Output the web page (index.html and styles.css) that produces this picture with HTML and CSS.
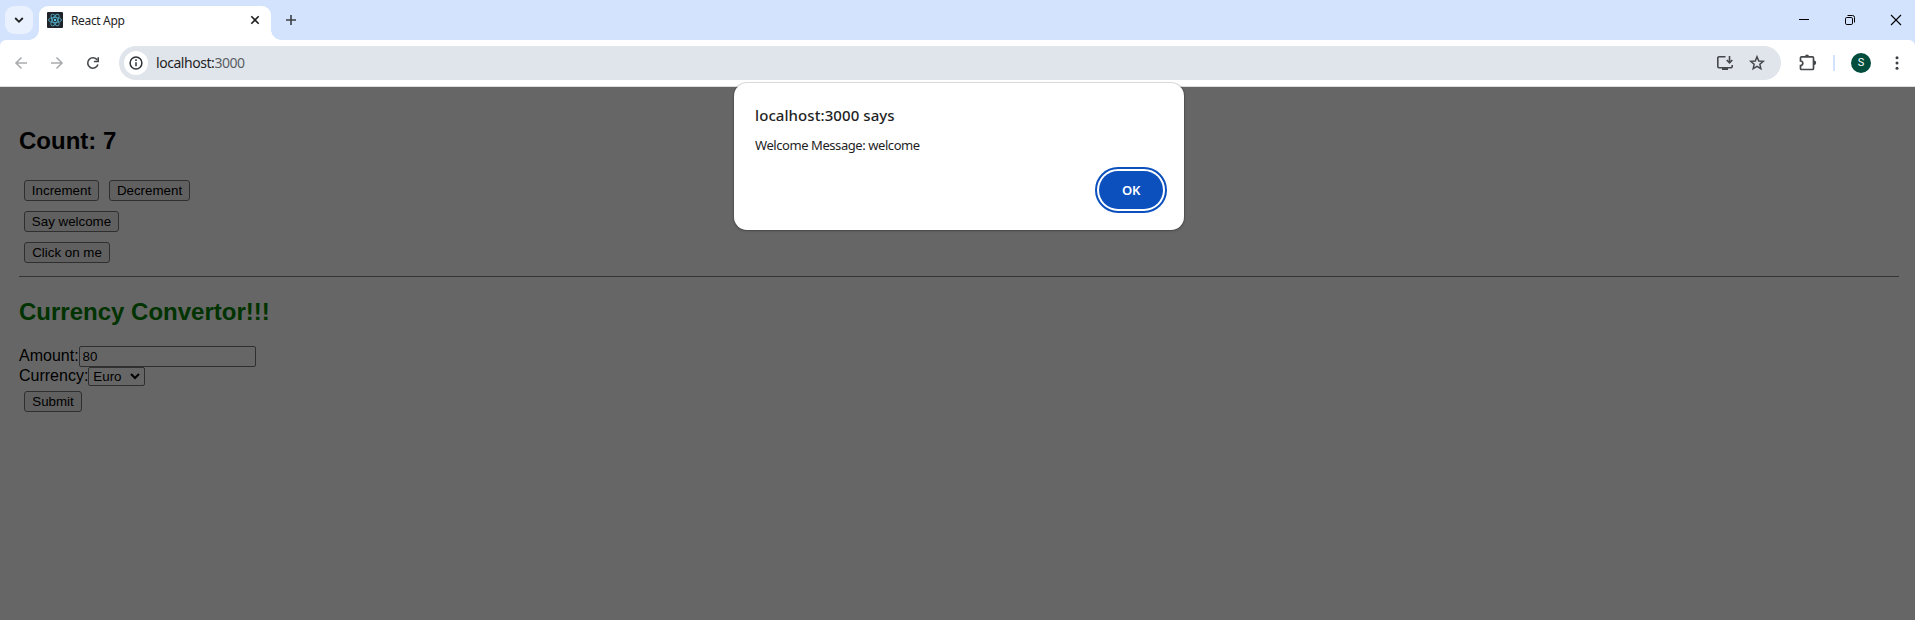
FILE: index.html
```html
<!DOCTYPE html>
<html lang="en">
<head>
<meta charset="utf-8">
<title>React App</title>
<link rel="stylesheet" href="styles.css">
</head>
<body>
<div class="browser">
  <header class="tabstrip">
    <div class="tab-search"><svg width="28" height="28" viewBox="0 0 28 28" fill="none" stroke="#1f1f1f" stroke-width="1.800"><path d="M10.200 12 14 15.800l3.800-3.800"/></svg></div>
    <div class="tab">
      <svg class="favicon" width="16" height="16" viewBox="0 0 16 16"><rect width="16" height="16" rx="1" fill="#20232a"/><g fill="none" stroke="#4fa9c0" stroke-width=".9"><ellipse cx="8" cy="8" rx="6.5" ry="2.6"/><ellipse cx="8" cy="8" rx="6.5" ry="2.6" transform="rotate(60 8 8)"/><ellipse cx="8" cy="8" rx="6.5" ry="2.6" transform="rotate(120 8 8)"/></g><circle cx="8" cy="8" r="1.2" fill="#5fcde8"/></svg>
      <span class="tab-title">React App</span>
      <svg class="tab-close" width="10" height="10" viewBox="0 0 10 10" stroke="#1f1f1f" stroke-width="1.600"><path d="m1.300 1.300 7.400 7.400M8.700 1.300 1.300 8.700"/></svg>
    </div>
    <svg class="new-tab" width="12" height="12" viewBox="0 0 12 12" stroke="#3c4043" stroke-width="1.600"><path d="M6 1v10M1 6h10"/></svg>
    <div class="window-controls">
      <svg width="46" height="40" viewBox="0 0 46 40" stroke="#000"><path d="M18 19.500h10"/></svg>
      <svg width="46" height="40" viewBox="0 0 46 40" fill="none" stroke="#000"><rect x="18.500" y="17.500" width="7" height="7" rx="1.300"/><path d="M20.500 15.500h5a2 2 0 0 1 2 2v5"/></svg>
      <svg width="46" height="40" viewBox="0 0 46 40" stroke="#000" stroke-width="1.100"><path d="m18 15 10 10M28 15 18 25"/></svg>
    </div>
  </header>
  <nav class="toolbar">
    <svg class="nav-icon" width="36" height="46" viewBox="0 0 36 46" fill="none" stroke="#aaacae" stroke-width="1.600"><path d="M24 23h-11M18.500 17.500 13 23l5.500 5.500"/></svg>
    <svg class="nav-icon" width="36" height="46" viewBox="0 0 36 46" fill="none" stroke="#aaacae" stroke-width="1.600"><path d="M12 23h11M17.500 17.500 23 23l-5.500 5.500"/></svg>
    <svg class="nav-icon" width="36" height="46" viewBox="0 0 36 46" fill="none" stroke="#45484b" stroke-width="1.600"><path d="M22.900 24.500a5.200 5.200 0 1 1-.7-4.500"/><path d="M23.200 17.200v4.300h-4.300"/></svg>
    <div class="omnibox">
      <div class="site-info"><svg width="24" height="24" viewBox="0 0 24 24" fill="none" stroke="#303336" stroke-width="1.500"><circle cx="12" cy="12" r="5.900"/><path d="M12 11.200v4M12 8.300v1.700"/></svg></div>
      <span class="url">localhost:<span class="port">3000</span></span>
      <svg class="install" width="18" height="18" viewBox="0 0 18 18" fill="none" stroke="#45484b" stroke-width="1.600"><path d="M9.500 2.800H3a1.200 1.200 0 0 0-1.200 1.200v8.500a1.200 1.200 0 0 0 1.200 1.200h12a1.200 1.200 0 0 0 1.200-1.200V11"/><path d="M13.500 2v6.500M10.700 6l2.800 2.800L16.300 6"/><path d="M6 15h6" stroke-width="2"/></svg>
      <svg class="star" width="18" height="18" viewBox="0 0 18 18" fill="none" stroke="#45484b" stroke-width="1.500"><path d="m9 2.800 1.750 4.150 4.500.4-3.400 2.950 1 4.400L9 12.400l-3.850 2.300 1-4.400-3.400-2.950 4.500-.4z"/></svg>
    </div>
    <svg class="extensions" width="20" height="20" viewBox="0 0 20 20" fill="none" stroke="#45484b" stroke-width="1.700"><path d="M3.500 3.800h11a1 1 0 0 1 1 1v10.700a1 1 0 0 1-1 1h-11a1 1 0 0 1-1-1v-2.900a2.300 2.300 0 0 0 0-4.600V4.800a1 1 0 0 1 1-1z"/><path d="M7 3.500a2 2 0 0 1 4 0zM16 7.500a2.200 2.200 0 0 1 0 4.400z" fill="#45484b" stroke="none"/></svg>
    <span class="divider"></span>
    <span class="avatar">S</span>
    <svg class="more" width="4" height="16" viewBox="0 0 4 16" fill="#3c4043"><circle cx="2" cy="2.800" r="1.500"/><circle cx="2" cy="8" r="1.500"/><circle cx="2" cy="13.200" r="1.500"/></svg>
  </nav>
  <main class="page">
    <h2 class="heading">Count: 7</h2>
    <div class="row"><button class="btn increment">Increment</button><button class="btn decrement">Decrement</button></div>
    <div class="row"><button class="btn welcome">Say welcome</button></div>
    <div class="row"><button class="btn click">Click on me</button></div>
    <hr class="rule">
    <h2 class="heading currency">Currency Convertor!!!</h2>
    <div class="field amount-field"><label>Amount:</label><input class="amount" value="80"></div>
    <div class="field"><label>Currency:</label><div class="select"><span>Euro</span><svg width="10" height="7" viewBox="0 0 10 7" fill="none" stroke="#000" stroke-width="2"><path d="m1 1 4 4 4-4"/></svg></div></div>
    <div class="row submit-row"><button class="btn submit">Submit</button></div>
    <div class="scrim"></div>
  </main>
  <section class="dialog" role="alertdialog">
    <h1 class="dialog-title">localhost:3000 says</h1>
    <p class="dialog-message">Welcome Message: welcome</p>
    <button class="ok">OK</button>
  </section>
</div>
</body>
</html>
```
FILE: styles.css
```css
* { box-sizing: border-box; }
body { margin: 0; overflow: hidden; background: #fff; }
svg { display: block; flex: none; }
.browser { position: relative; height: 620px; display: flex; flex-direction: column; font-family: "Noto Sans", "Open Sans", sans-serif; background: #d3e2fd; }

.tabstrip { height: 40px; flex: none; display: flex; align-items: flex-start; }
.tab-search { width: 28px; height: 28px; margin: 6px 6px 0 5px; border-radius: 9px; background: #e9f0fe; }
.tab { position: relative; width: 232px; height: 34px; margin-top: 6px; padding: 0 11px 6px 8px; display: flex; align-items: center; background: #fff; border-radius: 9px 9px 0 0; }
.tab::before, .tab::after { content: ""; position: absolute; bottom: 0; width: 10px; height: 10px; }
.tab::before { left: -10px; background: radial-gradient(circle at 0 0, transparent 9.5px, #fff 10px); }
.tab::after { right: -10px; background: radial-gradient(circle at 100% 0, transparent 9.5px, #fff 10px); }
.tab-title { margin-left: 8px; font-size: 12px; letter-spacing: -.35px; line-height: 16px; color: #1f1f1f; padding-top: 2px; }
.tab-close { margin-left: auto; }
.new-tab { margin: 14px 0 0 14px; }
.window-controls { margin-left: auto; margin-right: -4px; display: flex; }

.toolbar { height: 47px; flex: none; display: flex; align-items: center; padding: 0 16px 1px 3px; background: #fff; border-bottom: 1px solid #dcdde0; border-radius: 6px 6px 0 0; }
.omnibox { width: 1662px; height: 34px; margin-left: 8px; display: flex; align-items: center; padding: 0 15px 0 5px; background: #e0e5ec; border-radius: 17px; }
.site-info { width: 24px; height: 24px; border-radius: 50%; background: #fff; }
.url { margin-left: 8px; font-size: 14px; letter-spacing: -.45px; line-height: 20px; color: #1f1f1f; }
.port { color: #5b5f64; }
.install { margin-left: auto; margin-right: 14px; }
.extensions { margin-left: 17px; }
.divider { width: 2px; height: 16px; margin: 0 16px 0 15px; background: #d3e2fd; }
.avatar { width: 20px; height: 20px; border-radius: 50%; background: #004d3d; color: #fff; font: 11px/20px Roboto, sans-serif; text-align: center; }
.more { margin-left: auto; }

.page { position: relative; flex: 1; min-height: 0; padding: 38px 16px 0 19px; font-family: "Liberation Sans", Arial, sans-serif; font-size: 16px; color: #000; background: #fff; }
.heading { margin: 0; font-size: 24px; line-height: 32px; font-weight: 700; }
.row { display: flex; gap: 10px; height: 21px; padding-left: 5px; margin-bottom: 10px; }
.heading + .row { margin-top: 23px; }
.btn { height: 21px; padding: 0; border: 1px solid #767676; border-radius: 3px; background: #efefef; color: #000; font: 13.333px/19px "Liberation Sans", Arial, sans-serif; text-align: center; }
.increment { width: 75px; }
.decrement { width: 81px; }
.welcome { width: 95px; }
.click { width: 86px; }
.submit { width: 58px; }
.rule { margin: 13px 0 0; height: 1px; border: 0; background: #868686; }
.currency { margin-top: 19px; color: green; }
.field { display: flex; height: 20px; line-height: 18px; }
.amount-field { margin-top: 18px; height: 21px; line-height: 20px; }
.amount { width: 177px; height: 21px; margin: 0; padding: 0 3px 1px; border: 1px solid #767676; border-radius: 2px; background: #fff; font: 13.333px "Liberation Sans", Arial, sans-serif; }
.select { width: 57px; height: 19px; padding: 0 4px; display: flex; align-items: center; justify-content: space-between; border: 1px solid #767676; border-radius: 2px; background: #fff; font-size: 13.333px; line-height: 17px; }
.submit-row { margin-top: 4px; }
.scrim { position: absolute; inset: 0; background: rgba(0, 0, 0, .6); }

.dialog { position: absolute; left: 734px; top: 83px; width: 450px; height: 147px; padding: 20px 21px 0; background: #fff; border-radius: 13px; box-shadow: 0 0 0 1px rgba(0, 0, 0, .12), 0 1px 3px rgba(0, 0, 0, .2); color: #1f1f1f; display: flex; flex-direction: column; }
.dialog-title { margin: 0; font-size: 15px; line-height: 24px; font-weight: 500; letter-spacing: .08px; }
.dialog-message { margin: 8px 0 0; font-size: 13px; line-height: 20px; letter-spacing: -.43px; }
.ok { align-self: flex-end; width: 64px; height: 38px; margin-top: 16px; padding: 0; border: 0; border-radius: 19px; background: #0b50bd; color: #fff; font: 600 13px "Noto Sans", "Open Sans", sans-serif; letter-spacing: -.2px; outline: 2px solid #0b50bd; outline-offset: 2px; }
```
